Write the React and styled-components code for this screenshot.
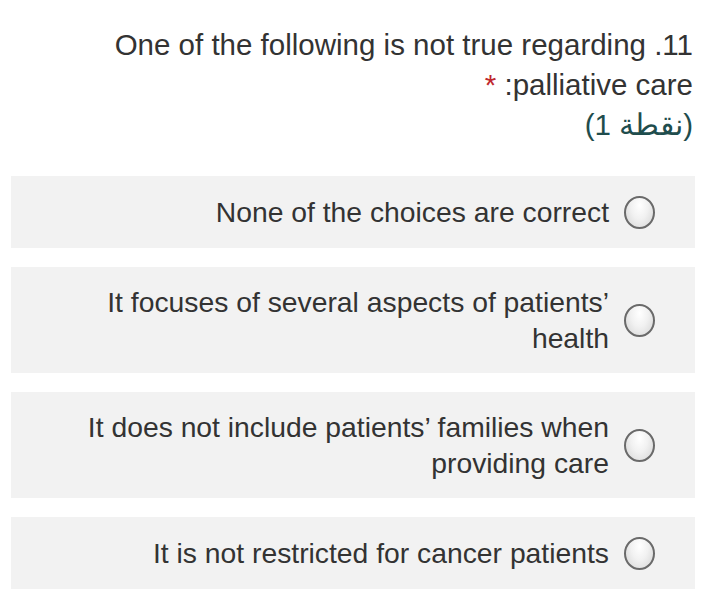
import React from "react";
import styled, { createGlobalStyle } from "styled-components";

const Global = createGlobalStyle`
  html, body { margin: 0; padding: 0; background: #ffffff; }
  body { font-family: "Liberation Sans", Arial, sans-serif; color: #333333; }
`;

const Page = styled.div`
  width: 720px;
  box-sizing: border-box;
  padding: 25px 25px 0 11px;
`;

const Header = styled.div`
  text-align: right;
  font-size: 29.5px;
  line-height: 40px;
  color: #333333;
  padding-right: 2px;
`;

const Line = styled.div`
  white-space: nowrap;
`;

const Star = styled.span`
  color: #c0282d;
`;

const Points = styled.div`
  color: #1f4d4d;
  font-family: "Liberation Sans", "Noto Sans", sans-serif;
`;

const List = styled.div`
  margin-top: 31px;
  display: flex;
  flex-direction: column;
  gap: 19px;
`;

const Card = styled.label`
  display: flex;
  align-items: center;
  justify-content: flex-end;
  gap: 15px;
  background: #f2f2f2;
  padding: ${(p) => (p.$multi ? "17px" : "18px")} 40px ${(p) => (p.$multi ? "17px" : "18px")} 20px;
`;

const OptionText = styled.span`
  font-size: 28.3px;
  line-height: 36px;
  text-align: right;
  color: #333333;
`;

const Radio = styled.span`
  flex: none;
  width: 31px;
  height: 33px;
  box-sizing: border-box;
  border-radius: 50%;
  border: 2px solid #6a6a6a;
  background: radial-gradient(ellipse at 50% 25%, #ffffff 0%, #f1f1f1 45%, #d4d4d4 100%);
`;

const options = [
  ["None of the choices are correct"],
  ["It focuses of several aspects of patients\u2019", "health"],
  ["It does not include patients\u2019 families when", "providing care"],
  ["It is not restricted for cancer patients"],
];

export default function App() {
  return (
    <Page>
      <Global />
      <Header>
        <Line>One of the following is not true regarding .11</Line>
        <Line>
          <Star>*</Star> :palliative care
        </Line>
        <Points>(1 نقطة)</Points>
      </Header>
      <List>
        {options.map((lines, i) => (
          <Card key={i} $multi={lines.length > 1}>
            <OptionText>
              {lines.map((l, j) => (
                <div key={j}>{l}</div>
              ))}
            </OptionText>
            <Radio />
          </Card>
        ))}
      </List>
    </Page>
  );
}
